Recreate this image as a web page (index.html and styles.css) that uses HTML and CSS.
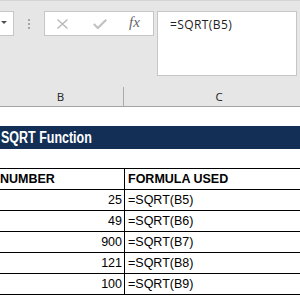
FILE: index.html
```html
<!DOCTYPE html>
<html lang="en">
<head>
  <meta charset="UTF-8">
  <title>SQRT Function</title>
  <link rel="stylesheet" href="styles.css">
</head>
<body>
  <div id="formula-bar">
    <div class="name-box"><span class="caret"></span></div>
    <div class="grip"><i></i><i></i><i></i></div>
    <div class="fx-tools">
      <svg class="icon-cancel" width="11" height="10" viewBox="0 0 11 10">
        <path d="M0.5 0.5 L10.5 9.5 M10.5 0.5 L0.5 9.5" />
      </svg>
      <svg class="icon-enter" width="14" height="10" viewBox="0 0 14 10">
        <path d="M0.8 5 L4.8 9 L13.2 0.8" />
      </svg>
      <span class="fx">fx</span>
    </div>
    <div class="formula-input">=SQRT(B5)</div>
  </div>

  <div id="col-headers">
    <div class="col-head col-b">B</div>
    <div class="col-head col-c">C</div>
  </div>

  <div id="sheet">
    <div class="spacer"></div>
    <div class="title-band"><span class="title-text">SQRT Function</span></div>
    <div class="spacer"></div>

    <div class="data-table">
      <div class="row head">
        <div class="cell">NUMBER</div>
        <div class="cell">FORMULA USED</div>
      </div>
      <div class="row">
        <div class="cell num">25</div>
        <div class="cell">=SQRT(B5)</div>
      </div>
      <div class="row">
        <div class="cell num">49</div>
        <div class="cell">=SQRT(B6)</div>
      </div>
      <div class="row">
        <div class="cell num">900</div>
        <div class="cell">=SQRT(B7)</div>
      </div>
      <div class="row">
        <div class="cell num">121</div>
        <div class="cell">=SQRT(B8)</div>
      </div>
      <div class="row">
        <div class="cell num">100</div>
        <div class="cell">=SQRT(B9)</div>
      </div>
    </div>
  </div>
</body>
</html>
```

FILE: styles.css
```css
* {
    box-sizing: border-box;
}

body {
    margin: 0;
    padding: 0;
    background-color: #ffffff;
    font-family: "Liberation Sans", Arial, sans-serif;
    overflow: hidden;
}

#formula-bar {
    display: flex;
    align-items: flex-start;
    height: 87px;
    padding-top: 10px;
    border-top: 1px solid #d4d4d4;
    background-color: #e6e6e6;
}

.name-box {
    display: flex;
    align-items: center;
    justify-content: flex-end;
    width: 14px;
    height: 25px;
    padding-right: 6px;
    padding-bottom: 2px;
    background-color: #ffffff;
    border: 1px solid #c6c6c6;
    border-left: none;
}

.caret {
    width: 0;
    height: 0;
    border-left: 3px solid transparent;
    border-right: 3px solid transparent;
    border-top: 3px solid #505050;
}

.grip {
    display: flex;
    flex-direction: column;
    gap: 2px;
    margin-left: 14px;
    margin-top: 8px;
}

.grip i {
    display: block;
    width: 2px;
    height: 2px;
    background-color: #a6a6a6;
}

.fx-tools {
    display: flex;
    align-items: center;
    width: 110px;
    height: 25px;
    margin-left: 14px;
    padding-left: 12px;
    background-color: #ffffff;
    border: 1px solid #c6c6c6;
}

.fx-tools svg {
    fill: none;
    display: block;
}

.icon-cancel {
    stroke: #b9b9b9;
    stroke-width: 1.4;
}

.icon-enter {
    margin-left: 25px;
    stroke: #c2c2c2;
    stroke-width: 2.2;
}

.fx {
    margin-left: 22px;
    font-family: "Liberation Serif", serif;
    font-style: italic;
    font-size: 15px;
    line-height: 15px;
    color: #666666;
    padding-bottom: 2px;
}

.formula-input {
    width: 140px;
    height: 65px;
    margin-left: 3px;
    padding: 5px 0 0 12px;
    background-color: #ffffff;
    border: 1px solid #c6c6c6;
    font-family: "Open Sans", sans-serif;
    font-size: 12px;
    line-height: 16px;
    letter-spacing: 0.4px;
    color: #1e1e1e;
}

#col-headers {
    display: flex;
    height: 20px;
    background-color: #e6e6e6;
    border-bottom: 1px solid #a3a3a3;
}

.col-head {
    font-family: "Open Sans", sans-serif;
    font-size: 11.5px;
    line-height: 19px;
    text-align: center;
    color: #222222;
}

.col-b {
    width: 124px;
    padding-right: 2px;
    border-right: 1px solid #ababab;
}

.col-c {
    flex: 1;
    padding-left: 14px;
}

.spacer {
    height: 19px;
}

.title-band {
    height: 23px;
    padding-left: 1px;
    background-color: #132f56;
    color: #ffffff;
    font-weight: bold;
    font-size: 16px;
    line-height: 23px;
    white-space: nowrap;
}

.title-text {
    display: inline-block;
    transform: scaleX(0.78);
    transform-origin: left center;
}

.data-table {
    border-top: 1px solid #000000;
    font-size: 12.5px;
    color: #000000;
}

.row {
    display: grid;
    grid-template-columns: 125px 1fr;
    height: 21px;
    border-bottom: 1px solid #000000;
}

.cell {
    line-height: 20px;
    padding-left: 3px;
    white-space: nowrap;
    overflow: hidden;
}

.row .cell:first-child {
    border-right: 1px solid #000000;
}

.head .cell {
    font-weight: bold;
}

.head .cell:first-child {
    padding-left: 0;
}

.num {
    text-align: right;
    padding-right: 2px;
}
```
